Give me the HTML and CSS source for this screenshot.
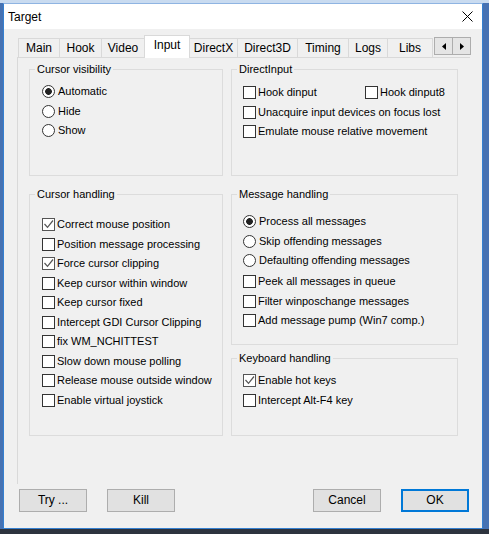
FILE: index.html
```html
<!DOCTYPE html>
<html>
<head>
<meta charset="utf-8">
<title>Target</title>
<link rel="stylesheet" href="styles.css">
</head>
<body>
<div class="window">
  <div class="titlebar">
    <span class="title">Target</span>
    <svg class="close" width="11" height="11" viewBox="0 0 11 11"><path d="M0.5 0.5 L10.5 10.5 M10.5 0.5 L0.5 10.5" stroke="#000" stroke-width="1" fill="none"/></svg>
  </div>
  <div class="client">
    <div class="tabstrip">
      <div class="tab t-main">Main</div>
      <div class="tab t-hook">Hook</div>
      <div class="tab t-video">Video</div>
      <div class="tab t-input selected">Input</div>
      <div class="tab t-dx">DirectX</div>
      <div class="tab t-d3d">Direct3D</div>
      <div class="tab t-timing">Timing</div>
      <div class="tab t-logs">Logs</div>
      <div class="tab t-libs">Libs</div>
      <div class="scroller">
        <div class="sbtn"><svg width="4" height="7" viewBox="0 0 4 7"><polygon points="4,0 0,3.5 4,7" fill="#000"/></svg></div>
        <div class="sbtn"><svg width="4" height="7" viewBox="0 0 4 7"><polygon points="0,0 4,3.5 0,7" fill="#000"/></svg></div>
      </div>
    </div>
    <div class="panel">
      <div class="col col-left">
        <fieldset class="group">
          <legend>Cursor visibility</legend>
          <div class="gbody cv">
            <div class="row"><span class="radio on"></span><span>Automatic</span></div>
            <div class="row"><span class="radio"></span><span>Hide</span></div>
            <div class="row"><span class="radio"></span><span>Show</span></div>
          </div>
        </fieldset>
        <fieldset class="group mt12">
          <legend>Cursor handling</legend>
          <div class="gbody ch">
            <div class="row"><span class="check on"><svg width="11" height="11" viewBox="0 0 11 11"><path d="M1.5 5 L4.5 8.3 L10 1.5" stroke="#555" stroke-width="1.2" fill="none"/></svg></span><span>Correct mouse position</span></div>
            <div class="row"><span class="check"></span><span>Position message processing</span></div>
            <div class="row"><span class="check on"><svg width="11" height="11" viewBox="0 0 11 11"><path d="M1.5 5 L4.5 8.3 L10 1.5" stroke="#555" stroke-width="1.2" fill="none"/></svg></span><span>Force cursor clipping</span></div>
            <div class="row"><span class="check"></span><span>Keep cursor within window</span></div>
            <div class="row"><span class="check"></span><span>Keep cursor fixed</span></div>
            <div class="row"><span class="check"></span><span>Intercept GDI Cursor Clipping</span></div>
            <div class="row"><span class="check"></span><span>fix WM_NCHITTEST</span></div>
            <div class="row"><span class="check"></span><span>Slow down mouse polling</span></div>
            <div class="row"><span class="check"></span><span>Release mouse outside window</span></div>
            <div class="row"><span class="check"></span><span>Enable virtual joystick</span></div>
          </div>
        </fieldset>
      </div>
      <div class="col col-right">
        <fieldset class="group">
          <legend>DirectInput</legend>
          <div class="gbody di">
            <div class="row">
              <div class="item di-first"><span class="check"></span><span>Hook dinput</span></div>
              <div class="item"><span class="check"></span><span>Hook dinput8</span></div>
            </div>
            <div class="row"><span class="check"></span><span>Unacquire input devices on focus lost</span></div>
            <div class="row"><span class="check"></span><span>Emulate mouse relative movement</span></div>
          </div>
        </fieldset>
        <fieldset class="group mt12">
          <legend>Message handling</legend>
          <div class="gbody mh">
            <div class="row"><span class="radio on"></span><span>Process all messages</span></div>
            <div class="row"><span class="radio"></span><span>Skip offending messages</span></div>
            <div class="row"><span class="radio"></span><span>Defaulting offending messages</span></div>
            <div class="row gap-top"><span class="check"></span><span>Peek all messages in queue</span></div>
            <div class="row"><span class="check"></span><span>Filter winposchange messages</span></div>
            <div class="row"><span class="check"></span><span>Add message pump (Win7 comp.)</span></div>
          </div>
        </fieldset>
        <fieldset class="group mt7">
          <legend>Keyboard handling</legend>
          <div class="gbody kh">
            <div class="row"><span class="check on"><svg width="11" height="11" viewBox="0 0 11 11"><path d="M1.5 5 L4.5 8.3 L10 1.5" stroke="#555" stroke-width="1.2" fill="none"/></svg></span><span>Enable hot keys</span></div>
            <div class="row"><span class="check"></span><span>Intercept Alt-F4 key</span></div>
          </div>
        </fieldset>
      </div>
    </div>
    <div class="buttons">
      <div class="btn">Try ...</div>
      <div class="btn push">Kill</div>
      <div class="btn">Cancel</div>
      <div class="btn default">OK</div>
    </div>
  </div>
</div>
</body>
</html>
```
FILE: styles.css
```css
html, body {
  margin: 0;
  padding: 0;
}
body {
  width: 489px;
  height: 534px;
  overflow: hidden;
  background: linear-gradient(to bottom, #c9dbf0 0, #c9dbf0 3px, #4672b3 3px, #4672b3 529px, #2d333e 529px);
  font-family: "Liberation Sans", Arial, sans-serif;
  color: #000;
}
.window {
  margin: 3px 0 0 3px;
  width: 478px;
  border: 1px solid #3580d0;
  border-top-color: #8fb4e2;
  background: #f0f0f0;
}
.titlebar {
  height: 25px;
  background: #fff;
  display: flex;
  align-items: center;
  justify-content: space-between;
  padding-left: 4px;
}
.title {
  font-size: 12px;
}
.close {
  margin-right: 9px;
  margin-top: -1px;
}
.client {
  height: 499px;
  box-sizing: border-box;
  padding: 6px 0 0 13px;
}
.tabstrip {
  display: flex;
  align-items: flex-end;
  height: 22px;
  padding-left: 1px;
}
.tab {
  box-sizing: border-box;
  height: 19px;
  border: 1px solid #d9d9d9;
  border-bottom: none;
  margin-left: -1px;
  font-size: 12px;
  line-height: 18px;
  text-align: center;
  background: #f0f0f0;
  white-space: nowrap;
}
.t-main { width: 42px; margin-left: 0; }
.t-hook { width: 43px; }
.t-video { width: 44px; }
.t-input { width: 46px; }
.t-dx { width: 49px; }
.t-d3d { width: 61px; }
.t-timing { width: 52px; }
.t-logs { width: 40px; }
.t-libs { width: 46px; }
.tab.selected {
  height: 23px;
  margin-bottom: -1px;
  padding-bottom: 4px;
  background: #fff;
  position: relative;
  z-index: 1;
}
.scroller {
  align-self: flex-start;
  margin: 2px 0 0 1px;
  display: flex;
}
.sbtn {
  box-sizing: border-box;
  width: 19px;
  height: 18px;
  border: 1px solid #adadad;
  background: #e5e5e5;
  display: flex;
  align-items: center;
  justify-content: center;
}
.sbtn + .sbtn {
  margin-left: -1px;
}
.panel {
  width: 453px;
  height: 427px;
  box-sizing: border-box;
  border-top: 1px solid #d9d9d9;
  border-left: 1px solid #d9d9d9;
  padding: 5px 0 0 11px;
  display: flex;
  align-items: flex-start;
  gap: 8px;
}
.col {
  display: flex;
  flex-direction: column;
}
.col-left { width: 194px; }
.col-right { width: 227px; }
.group {
  margin: 0;
  padding: 0;
  min-width: 0;
  border: 1px solid #dcdcdc;
}
.group legend {
  margin-left: 5px;
  padding: 0 2px;
  font-size: 11px;
  line-height: 13px;
}
.mt12 { margin-top: 12px; }
.mt7 { margin-top: 7px; }
.gbody {
  box-sizing: border-box;
  font-size: 11px;
}
.cv { height: 99px; padding: 6px 0 0 12px; }
.di { height: 99px; padding: 7px 0 0 11px; }
.ch { height: 234px; padding: 14px 0 0 12px; }
.mh { height: 143px; padding: 11px 0 0 11px; }
.kh { height: 70px; padding: 6px 0 0 11px; }
.row {
  display: flex;
  align-items: center;
  height: 19.5px;
  line-height: 13px;
  white-space: nowrap;
}
.row.gap-top {
  margin-top: 1.5px;
}
.item {
  display: flex;
  align-items: center;
}
.di-first {
  width: 122px;
}
.check {
  flex: none;
  box-sizing: border-box;
  width: 13px;
  height: 13px;
  border: 1px solid #333;
  background: #fff;
  margin-right: 2px;
  display: flex;
}
.check.on {
  border-color: #555;
}
.radio {
  flex: none;
  box-sizing: border-box;
  width: 13px;
  height: 13px;
  border: 1px solid #333;
  border-radius: 50%;
  background: #fff;
  margin-right: 3px;
}
.radio.on {
  background: radial-gradient(circle, #222 0, #222 3px, #fff 3.7px);
}
.buttons {
  display: flex;
  gap: 20px;
  width: 450px;
  margin: 5px 0 0 2px;
}
.btn {
  box-sizing: border-box;
  width: 68px;
  height: 23px;
  border: 1px solid #adadad;
  background: #e1e1e1;
  font-size: 12px;
  line-height: 21px;
  text-align: center;
}
.btn.push {
  margin-right: auto;
}
.btn.default {
  border: 2px solid #0078d7;
  line-height: 19px;
}
```
